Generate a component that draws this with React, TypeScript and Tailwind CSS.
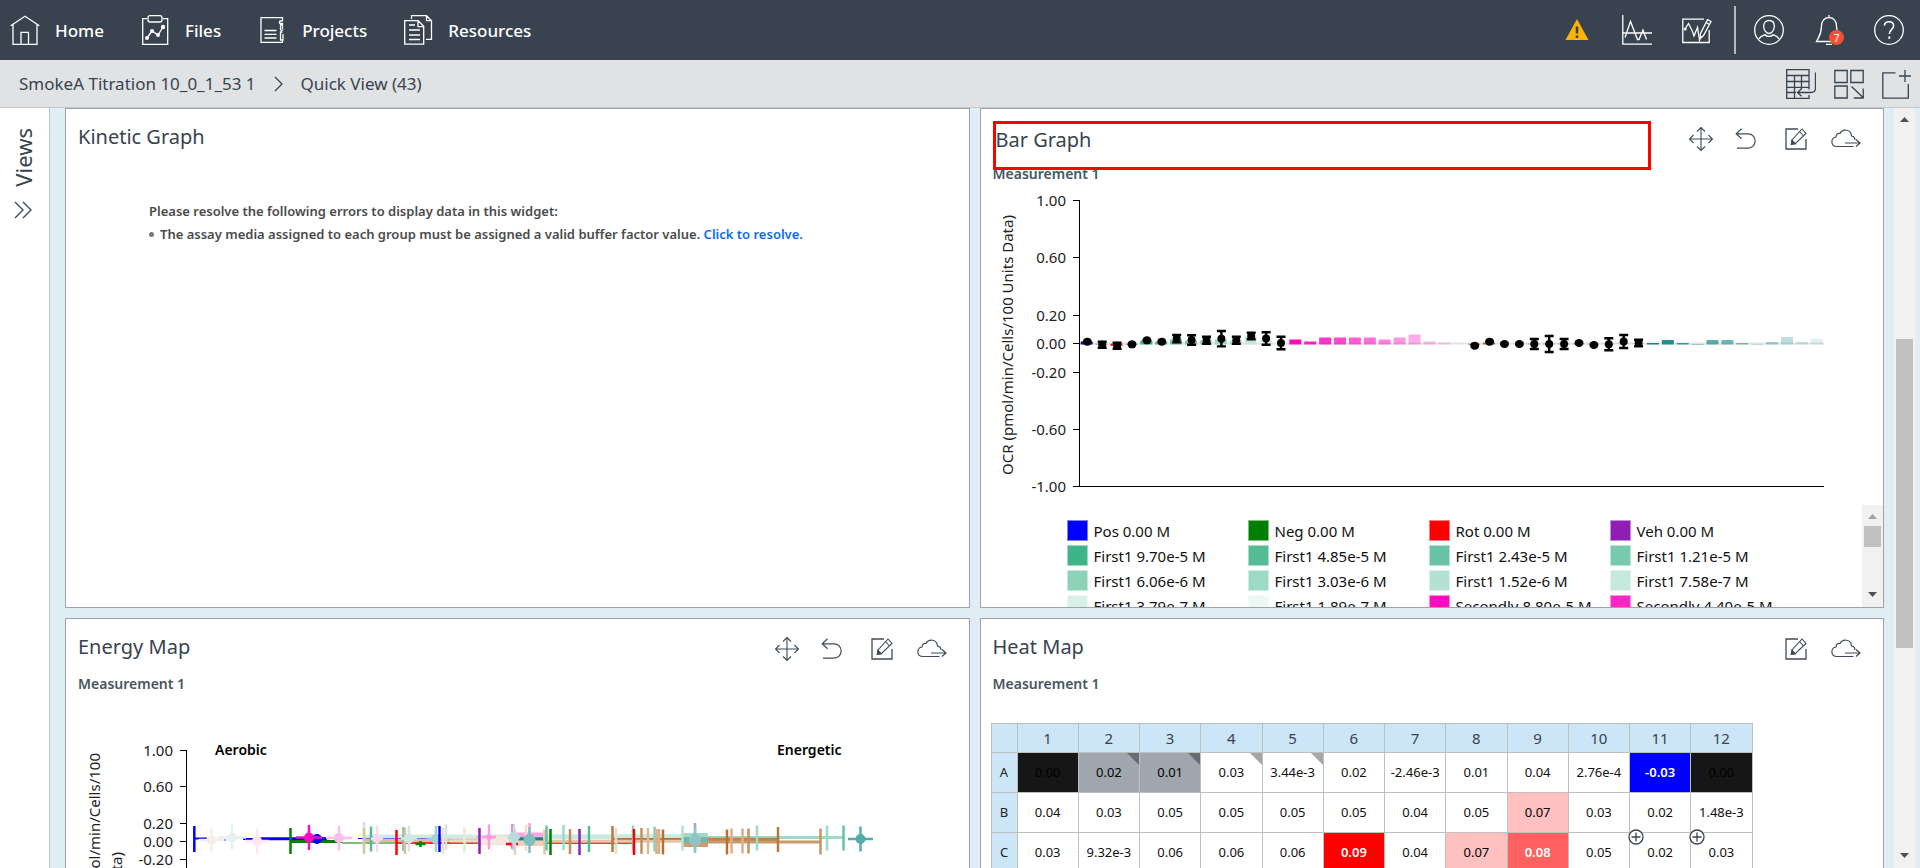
import React from "react";

type Svg = { children: React.ReactNode; w?: number; h?: number; className?: string };

function Icon({ children, w = 30, h = 30, className = "" }: Svg) {
  return (
    <svg width={w} height={h} viewBox={`0 0 ${w} ${h}`} fill="none" stroke="currentColor" strokeWidth="1.3" className={`shrink-0 ${className}`} aria-hidden="true">
      {children}
    </svg>
  );
}

const HomeIcon = () => (
  <Icon>
    <path d="M.7 10.7 15 1.2l14.3 9.5M3 9.5v19.8h24V9.5M11 29V17.3h7.500V29" />
  </Icon>
);
const FilesIcon = () => (
  <Icon>
    <path d="M7 3.700H2.700v25.600h25V3.700H23" />
    <rect x="8" y=".7" width="14" height="6.300" rx="2" />
    <path d="M7 23l5-7 6 4 5-8" />
    <g fill="currentColor" stroke="none">
      <circle cx="7" cy="23" r="2" /><circle cx="12" cy="16" r="2" /><circle cx="18" cy="20" r="2" /><circle cx="23" cy="12" r="2.200" />
    </g>
  </Icon>
);
const ProjectsIcon = () => (
  <Icon>
    <path d="M25.500 6V2.700H4v24.600h21.500v-1.500M7.500 15.500h12M7.500 19.300h12M7.500 23h12" />
    <path d="M25.500 6h-2c-1.500 0-1.500 2.500 0 2.500h2v5.500M25.500 10h-2v4.500c0 1 2.500 1 2.500 0M25.500 17h-2v8h2.500v-6" />
  </Icon>
);
const ResourcesIcon = () => (
  <Icon>
    <path d="M8.500 4V.7h15l5 5v18.600H23M23.500.7v5h5M1.700 5.700h13.500l5.500 5.500v18H1.700zM15 5.700v6h5.700M6 10h6M6 15h11M6 20h11M6 24.500h11" />
  </Icon>
);
const WarningIcon = () => (
  <Icon>
    <path d="M15 4 26.500 25h-23z" fill="#ffb500" stroke="none" />
    <path d="M15 11.500v7M15 20.500v2.500" stroke="#38434f" strokeWidth="2.600" />
  </Icon>
);
const PeaksIcon = () => (
  <Icon>
    <path d="M.8 0v29.200H30M.8 18H30" />
    <path d="M3 22.500 8.500 6.500l7 18h1.500l4-9.500 3.500 9.500" />
  </Icon>
);
const WaveEditIcon = () => (
  <Icon>
    <path d="M22 4.200H.8v23.300h26.400V15M3 14l3.500-5.500 4 8 1.500 4.500 3.500-8.500 2 12.500 1.500-4" />
    <path d="m18.500 18.500-.8 5.500 3.800-3.500 7.500-14-3.500-1.800zM24 7.500l3.500 2" />
    <circle cx="3.200" cy="14" r="1.500" fill="currentColor" stroke="none" />
  </Icon>
);
const UserIcon = () => (
  <Icon>
    <circle cx="15" cy="15" r="14.300" />
    <path d="M15 5.500c3.300 0 5.300 2.300 5.300 5.700 0 3.700-2.300 7.300-5.300 7.300s-5.300-3.600-5.300-7.300c0-3.400 2-5.700 5.300-5.700zM11.500 19.500c-2 1-5 .8-6.500 4.500M18.500 19.500c2 1 5 .8 6.500 4.500M11 19.500c1 2.500 7 2.500 8 0" />
  </Icon>
);
const BellIcon = () => (
  <Icon>
    <path d="M15 0v2.500M15 2.500c-5 0-7.500 4-7.500 8.500 0 8-2 10-5 15.500h24C24 21 22.500 19 22.500 11c0-4.500-2.500-8.500-7.500-8.500zM12 29.300h6" />
  </Icon>
);
const HelpIcon = () => (
  <Icon>
    <circle cx="15" cy="15" r="14.300" />
    <path d="M10.500 10.500C10.500 8 12.500 6.700 15 6.700s4.600 1.500 4.600 4c0 4-4.300 4-4.300 8.300" strokeWidth="1.600" />
    <path d="M15.300 21.500v2.300" strokeWidth="2" />
  </Icon>
);
const TableBackIcon = () => (
  <Icon>
    <path d="M23 20.500V.700H.7v28.600H23V26M.7 6.500H23M.7 12.500H23M.7 18.300H23M.7 23.500H10M8.500 6.500v22.500M15.500 6.500V20" />
    <path d="M29.500 3.500V19c0 3-1.500 4.500-4.500 4.500H11.500m4-3.800-4 3.800 4 3.800" />
  </Icon>
);
const GridArrowIcon = () => (
  <Icon>
    <path d="M.8 1.500h12.400v12H.8zM16.800 1.500h12.400v12H16.800zM.8 17h12.400v12H.8zM17.500 17.500l11.500 11M29.200 19.500v9.500h-9.500" />
  </Icon>
);
const AddFrameIcon = () => (
  <Icon>
    <path d="M13.500 3.800H.8v25.400h25.500V15M23 1v12M17 7h12" />
  </Icon>
);
const MoveIcon = () => (
  <Icon w={24} h={24}>
    <path d="M12 .8v22.400M.8 12h22.400M8 4.500l4-4 4 4M8 19.500l4 4 4-4M4.500 8l-4 4 4 4M19.500 8l4 4-4 4" strokeWidth="1.100" />
  </Icon>
);
const UndoIcon = () => (
  <Icon w={22} h={22}>
    <path d="M6.500.8 1.200 5.800l5.300 5M1.500 5.800H13c9.500 0 9.500 14.400 0 14.400H2" strokeWidth="1.200" />
  </Icon>
);
const EditIcon = () => (
  <Icon w={22} h={22}>
    <path d="M13 1H1v20h20V11" />
    <path d="m7 12-.5 4 4-.5L21 5.500 17 1zM14.500 3.500l4 4.500" strokeWidth="1.100" />
    <path d="m6.300 16.300.7-4 3.200 3.400z" fill="currentColor" />
  </Icon>
);
const CloudIcon = () => (
  <Icon>
    <path d="M22.500 22.500H6C-.8 22.500-.5 13.500 5 13c0-3 2-4 4-3.500C11.500 4.500 20 5 20.500 12c2.500.5 3.500 2 3.500 4M14 19h15m-4-3.500 4 3.500-4 3.500" strokeWidth="1.200" />
  </Icon>
);

function Scroller({ thumb, dimUp = false }: { thumb: string; dimUp?: boolean }) {
  return (
    <div className="flex w-[21px] shrink-0 flex-col items-center bg-[#f1f1f1]" aria-hidden="true">
      <svg width="21" height="21" viewBox="0 0 21 21"><path d="M6 14 10.500 9 15 14z" fill={dimUp ? "#a3a3a3" : "#505050"} /></svg>
      <div className="flex w-[17px] flex-1 flex-col">
        <div className={`w-full bg-[#c1c1c1] ${thumb}`} />
      </div>
      <svg width="21" height="21" viewBox="0 0 21 21"><path d="M6 6 10.500 11 15 6z" fill="#505050" /></svg>
    </div>
  );
}

function Tools({ full = true }: { full?: boolean }) {
  const btn = "flex h-[30px] w-[30px] items-center justify-center";
  return (
    <div className="flex gap-5 text-[#3f4b5a]">
      {full && (
        <>
          <button type="button" aria-label="Move" className="flex h-[30px] w-5 items-center justify-center"><MoveIcon /></button>
          <button type="button" aria-label="Undo" className={btn}><UndoIcon /></button>
        </>
      )}
      <button type="button" aria-label="Edit" className={btn}><EditIcon /></button>
      <button type="button" aria-label="Export" className={btn}><CloudIcon /></button>
    </div>
  );
}

type PanelProps = { title: string; tools?: "all" | "short"; framed?: boolean; sub?: boolean; children?: React.ReactNode };

function Panel({ title, tools, framed = false, sub = true, children }: PanelProps) {
  return (
    <section className="flex h-[500px] min-w-0 flex-col overflow-hidden border border-[#9ba3ad] bg-white">
      <div className="flex h-[60px] shrink-0 items-start justify-between pt-3 pr-[22px] pl-3">
        <h2 className={`text-xl leading-8 text-[#38434f] ${framed ? "h-[49px] w-[658px] border-[3px] border-[#ff0000]" : ""}`}>{title}</h2>
        {tools && <div className="pt-[3px]"><Tools full={tools === "all"} /></div>}
      </div>
      {sub && <p className="h-[13px] pl-3 text-sm leading-[10px] font-semibold text-[#485563]">Measurement 1</p>}
      {children}
    </section>
  );
}

const FIRST = ["#3eb489", "#54bc96", "#67c3a1", "#78caae", "#8cd2b9", "#9fdac6", "#b3e2d2", "#c6e9dd", "#d9f0e7", "#ecf8f3"];
const BAR_PITCH = 14.9;
const ZERO = 153.7;

type Bar = { i: number; h: number; fill: string; o?: number };
const bars: Bar[] = [
  { i: 0, h: 3, fill: "#0000ff" },
  { i: 1, h: -1, fill: "#008000", o: 0.5 },
  { i: 2, h: -2, fill: "#ff0000" },
  { i: 3, h: -1, fill: "#911eb4", o: 0.3 },
  ...[4, 3, 5, 4, 4, 5, 4, 8, 5, 1].map((h, k) => ({ i: 4 + k, h, fill: FIRST[k] })),
  ...[5, 3, 7, 7, 7, 7, 5, 7, 10, 3, 2].map((h, k) => ({ i: 14 + k, h, fill: "#ff0bbf", o: 1 - k * 0.082 })),
  ...[-1, 2, 0, 0, 1, 1, 1, 1, -1, 1, 2, 1].map((h, k) => ({ i: 26 + k, h, fill: "#c06a1f", o: 1 - k * 0.08 })),
  ...[1, 4, 1, 0, 4, 4, 1, 0, 2, 7, 2, 5].map((h, k) => ({ i: 38 + k, h: h + 0.5, fill: "#0f8787", o: 1 - k * 0.08 })),
];
const points: [number, number, number][] = [
  [0, 151.700, 0], [1, 154.700, 3], [2, 155.700, 3], [3, 154.300, 0], [4, 150.300, 0], [5, 151.700, 0], [6, 148.700, 3.700],
  [7, 150, 4.700], [8, 150.300, 3.500], [9, 148.700, 7.700], [10, 150.300, 3.500], [11, 146, 3.200], [12, 148.500, 6.200], [13, 153, 6.200],
  [26, 155.700, 0], [27, 151.700, 0], [28, 154, 0], [29, 154, 0], [30, 154, 5], [31, 154, 8], [32, 154, 5], [33, 153, 0],
  [34, 155, 0], [35, 154.300, 6], [36, 151.500, 6.500], [37, 153, 3.200],
];
const barTicks: [string, number][] = [["1.00", 10.500], ["0.60", 67.500], ["0.20", 125.500], ["0.00", 153.500], ["-0.20", 182.500], ["-0.60", 239.500], ["-1.00", 296.500]];

function BarChart() {
  return (
    <svg width="860" height="315" viewBox="0 0 860 315" className="shrink-0 text-[15px]" role="img" aria-label="Bar graph">
      <path d="M98 153.500H843" stroke="#e3e3e3" strokeWidth="2" />
      {bars.map((b) => (
        <rect key={b.i} x={99.700 + b.i * BAR_PITCH} width="12" y={b.h > 0 ? ZERO + 0.8 - b.h : ZERO} height={Math.abs(b.h)} fill={b.fill} fillOpacity={b.o ?? 1} />
      ))}
      {points.map(([i, y, e]) => {
        const x = 106.300 + i * BAR_PITCH;
        return (
          <g key={i}>
            {e > 0 && <path d={`M${x - 4.500} ${y - e}h9M${x} ${y - e}v${2 * e}M${x - 4.500} ${y + e}h9`} stroke="#000" strokeWidth="2.400" />}
            <ellipse cx={x} cy={y} rx={e > 0 ? 4 : 4.500} ry={4} />
          </g>
        );
      })}
      <path d="M98.500 10v287M92 296.500h751" stroke="#000" fill="none" />
      {barTicks.map(([t, y]) => (
        <g key={t}>
          <path d={`M92 ${y}h7`} stroke="#000" />
          <text x="85" y={y + 5} textAnchor="end" fill="#222">{t}</text>
        </g>
      ))}
      <text transform="translate(32 155) rotate(-90)" textAnchor="middle" fill="#222">OCR (pmol/min/Cells/100 Units Data)</text>
    </svg>
  );
}

const legend: [string, string][] = [
  ["#0000ff", "Pos 0.00 M"], ["#008000", "Neg 0.00 M"], ["#ff0000", "Rot 0.00 M"], ["#911eb4", "Veh 0.00 M"],
  [FIRST[0], "First1 9.70e-5 M"], [FIRST[1], "First1 4.85e-5 M"], [FIRST[2], "First1 2.43e-5 M"], [FIRST[3], "First1 1.21e-5 M"],
  [FIRST[4], "First1 6.06e-6 M"], [FIRST[5], "First1 3.03e-6 M"], [FIRST[6], "First1 1.52e-6 M"], [FIRST[7], "First1 7.58e-7 M"],
  [FIRST[8], "First1 3.79e-7 M"], [FIRST[9], "First1 1.89e-7 M"], ["#ff0bbf", "Secondly 8.80e-5 M"], ["#ff24c5", "Secondly 4.40e-5 M"],
];

function Legend() {
  return (
    <div className="flex min-h-0 flex-1">
      <ul className="grid flex-1 auto-rows-[21px] grid-cols-[repeat(4,181px)] gap-y-1 overflow-hidden pt-[15px] pl-[86px]">
        {legend.map(([c, t]) => (
          <li key={t} className="flex items-center gap-[6px] text-[15px] leading-5 whitespace-nowrap text-[#111]">
            <span className="h-[21px] w-[21px] border border-white/50" style={{ backgroundColor: c }} />
            {t}
          </li>
        ))}
      </ul>
      <Scroller thumb="h-[21px]" dimUp />
    </div>
  );
}

/* [from x, to x, y, thickness, colour] */
const spans: [number, number, number, number, string][] = [
  [128, 141, 93.500, 2, "#0000ff"], [151, 160, 95, 1.500, "#5a5aff"], [177, 194, 94, 2, "#0000ff"], [194, 261, 93.800, 3, "#0000ff"],
  [261, 284, 93, 1, "#0000ff"], [292, 374, 93.500, 1, "#0000ff"],
  [224, 276, 96.500, 3, "#008000"], [276, 345, 98, 2, "#7cc47c"], [344, 370, 97.500, 3, "#008000"],
  [330, 568, 98, 2, "#ff3030"],
  [298, 480, 91.500, 4, "#cdebe0"], [298, 372, 95.500, 3, "#dcbd9c"], [360, 480, 95, 3, "#c9c2b0"],
  [411, 437, 92, 2, "#ff8adb"], [436, 452, 91.500, 3, "#c4cfe2"],
  [449, 477, 90, 5, "#ffa3e4"], [452, 477, 93.800, 3, "#0f8787"], [450, 478, 98.500, 5, "#ecd0b8"],
  [384, 422, 96, 3, "#ecd9c8"], [412, 452, 95.500, 10, "#f3e8dd"],
  [478, 616, 91.800, 5, "#c9ebdf"], [546, 616, 94.500, 3, "#b5713a"], [478, 616, 96.300, 3, "#e3c5a8"],
  [642, 778, 92.500, 3, "#9fdac6"], [616, 712, 94.800, 4, "#c08349"], [616, 755, 97, 3, "#c89a6c"],
  [616, 642, 91, 6, "#9fdac6"], [616, 642, 97, 10, "#cf9b71"], [616, 642, 95, 5, "#6fb5b3"],
];
/* [x, y, half height, colour, half width of the horizontal whisker, dot radius] */
type Mark = [number, number, number, string, number?, number?];
const marks: Mark[] = [
  [128.300, 94, 13, "#0000ff"], [224.500, 96, 13, "#008000"], [251, 94, 4.500, "#0000ff", 9, 5], [243, 92.500, 12.500, "#ff0bbf", 13, 5],
  [145.500, 95, 12.500, "#f6efe8", 13, 5], [166, 92.500, 13, "#e4f1f0", 14, 5], [191, 96, 12.500, "#ffe4f6", 12, 5], [273, 93, 12.500, "#ffbdeb", 13, 5],
  [298, 92, 15, "#c6e9dd"], [298, 96, 13, "#dcc3a8"], [305, 94, 12.500, "#54bc96"], [311, 94, 13, "#ffd6f2", 6, 4], [330.500, 97.500, 12.500, "#ff0000"],
  [337.500, 94, 12, "#74c3a4"], [339, 96, 13, "#dcc3a8"], [343, 93.500, 13, "#cfe8e7", 8, 5], [354.500, 99, 3, "#008000", 5], [370, 94, 13, "#a3d3d1", 8, 5],
  [373.500, 94, 13, "#0000ff"], [377, 96, 13, "#f0e0d2"], [380, 92, 13, "#cfe8e7"], [398.500, 95, 12.500, "#f3e4d8"], [413.500, 96, 13, "#911eb4"],
  [423, 92, 12.500, "#ff9be1", 7, 3], [446, 99, 3, "#ff0000", 6], [446.500, 91.500, 12.500, "#ff5bd2"], [449, 97, 13, "#ecd0b8"], [447.700, 92.500, 13, "#b9dddc", 6, 5.500],
  [460, 93, 13, "#efdccc"], [463.500, 90, 12, "#ff9be1"], [463.500, 95, 13, "#7fbfbe", 5, 6], [478.500, 97, 12.500, "#e3c5a8"],
  [480.500, 93, 12.500, "#67c3a1"], [484.500, 97, 13, "#008000"], [497.500, 92.500, 12.500, "#9fdac6"], [504, 96.500, 12.500, "#c58a55"], [513.500, 97, 13, "#911eb4"],
  [523, 94, 13, "#54bc96"], [546.500, 94, 13, "#b8783f"], [550, 96, 13, "#ecd9c8"], [567, 93, 12.500, "#8cd2b9"], [568, 97, 13, "#ff0000"],
  [575.500, 96, 13, "#c88d5c"], [582, 96, 13, "#dfb793"], [588.500, 94, 12.500, "#8cd2b9"], [590.500, 96.500, 12.500, "#dcae88"], [593, 96.500, 12.500, "#dcae88"],
  [597, 97, 12.500, "#b86f30"], [616.500, 93, 12.500, "#b3e2d2"], [629, 92, 14, "#b598c8"], [629, 95, 13, "#8cc7c5", 5, 6],
  [661, 97, 12.500, "#b86f30"], [665.500, 96, 12.500, "#dcae88"], [676.500, 96, 12.500, "#dcae88"], [682.500, 96, 12.500, "#c88d5c"], [691, 93, 12.500, "#9fdac6"],
  [712, 94.500, 12.500, "#b8783f"], [754.500, 96.500, 13, "#c89262"], [761, 93, 12.500, "#9fdac6"], [777.500, 93, 12.500, "#67c3a1"], [794.500, 94, 12.500, "#55abab", 12.500, 5],
];
const energyTicks: [string, number][] = [["1.00", 5.500], ["0.60", 41.500], ["0.20", 78.500], ["0.00", 96.500], ["-0.20", 114.500], ["-0.60", 150.500], ["-1.00", 186.500]];

function EnergyChart() {
  return (
    <svg width="860" height="272" viewBox="0 -12 860 272" className="mt-[41px] shrink-0 text-[15px]" role="img" aria-label="Energy map">
      <path d="M120.500 5v182M114 186.500h716" stroke="#000" fill="none" />
      {energyTicks.map(([t, y]) => (
        <g key={t}>
          <path d={`M114 ${y}h7`} stroke="#000" />
          <text x="107" y={y + 5} textAnchor="end" fill="#222">{t}</text>
        </g>
      ))}
      <text transform="translate(34 8) rotate(-90)" textAnchor="end" fill="#222">OCR (pmol/min/Cells/100</text>
      <text transform="translate(56 107) rotate(-90)" textAnchor="end" fill="#222">Units Data)</text>
      <text x="149" y="10" className="text-sm font-semibold">Aerobic</text>
      <text x="711" y="10" className="text-sm font-semibold">Energetic</text>
      {spans.map(([a, b, y, w, c], i) => (
        <path key={i} d={`M${a} ${y}H${b}`} stroke={c} strokeWidth={w} />
      ))}
      {marks.map(([x, y, h, c, hw, r], i) => (
        <g key={i} stroke={c} fill={c} strokeWidth="2.500">
          <path d={`M${x} ${y - h}v${2 * h}`} />
          {hw && <path d={`M${x - hw} ${y}h${2 * hw}`} />}
          {r && <circle cx={x} cy={y} r={r} stroke="none" />}
        </g>
      ))}
    </svg>
  );
}

const heat: [string, string[]][] = [
  ["A", ["0.00", "0.02", "0.01", "0.03", "3.44e-3", "0.02", "-2.46e-3", "0.01", "0.04", "2.76e-4", "-0.03", "0.00"]],
  ["B", ["0.04", "0.03", "0.05", "0.05", "0.05", "0.05", "0.04", "0.05", "0.07", "0.03", "0.02", "1.48e-3"]],
  ["C", ["0.03", "9.32e-3", "0.06", "0.06", "0.06", "0.09", "0.04", "0.07", "0.08", "0.05", "0.02", "0.03"]],
];
const tone: Record<string, string> = {
  A1: "bg-[#161616] text-black", A12: "bg-[#161616] text-black",
  A2: "bg-[#a0a6ad] text-black", A3: "bg-[#a0a6ad] text-black",
  A11: "bg-[#0000ff] text-white font-semibold",
  B9: "bg-[#ffc0c0] text-black", C8: "bg-[#ffc0c0] text-black",
  C6: "bg-[#ff0000] text-white font-semibold", C9: "bg-[#ff6060] text-white font-semibold",
};
const flagged = ["A2", "A3", "A4", "A5"];
const added = ["C11", "C12"];

function HeatTable() {
  return (
    <table className="mt-[31px] ml-[10px] w-[762px] shrink-0 table-fixed border-collapse">
      <thead>
        <tr className="h-[29px] bg-[#cce6f7] text-[15px] leading-5 text-[#38434f]">
          <th className="w-[26px] border border-[#bfbfbf]" aria-label="Row" />
          {heat[0][1].map((_, i) => (
            <th key={i} scope="col" className="border border-[#bfbfbf] p-0 font-normal">{i + 1}</th>
          ))}
        </tr>
      </thead>
      <tbody>
        {heat.map(([r, cells]) => (
          <tr key={r} className="h-10">
            <th scope="row" className="border border-[#bfbfbf] bg-[#cce6f7] p-0 text-[13px] font-normal text-[#222]">{r}</th>
            {cells.map((v, i) => {
              const id = `${r}${i + 1}`;
              return (
                <td key={id} className={`relative border border-[#bfbfbf] p-0 text-center text-[13px] ${tone[id] ?? "text-[#111]"}`}>
                  {v}
                  {flagged.includes(id) && (
                    <svg width="12" height="12" viewBox="0 0 12 12" className="absolute top-0 right-0"><path d="M0 0h12v12z" fill="#000" fillOpacity=".35" /></svg>
                  )}
                  {added.includes(id) && (
                    <svg width="16" height="16" viewBox="0 0 16 16" className="absolute -top-1 -left-[2px] z-10"><circle cx="8" cy="8" r="7" fill="#fff" stroke="#38434f" strokeWidth="1.300" /><path d="M8 3.500v9M3.500 8h9" stroke="#38434f" strokeWidth="1.300" /></svg>
                  )}
                </td>
              );
            })}
          </tr>
        ))}
      </tbody>
    </table>
  );
}

const nav = [
  { label: "Home", icon: <HomeIcon /> },
  { label: "Files", icon: <FilesIcon /> },
  { label: "Projects", icon: <ProjectsIcon /> },
  { label: "Resources", icon: <ResourcesIcon /> },
];

export default function App() {
  return (
    <div className="flex h-screen flex-col overflow-hidden bg-white font-['Noto_Sans',sans-serif] text-[#38434f]">
      <header className="flex h-[60px] shrink-0 items-center justify-between bg-[#38434f] pr-4 pl-[10px] text-white">
        <nav className="flex gap-9">
          {nav.map((n) => (
            <a key={n.label} href="#" className="flex items-center gap-[15px] text-[17px] leading-8 font-medium">
              {n.icon}
              <span className="pt-[2px]">{n.label}</span>
            </a>
          ))}
        </nav>
        <div className="flex items-center">
          <div className="flex gap-[30px] pr-[22px]">
            <button type="button" aria-label="Warnings"><WarningIcon /></button>
            <button type="button" aria-label="Wave analysis"><PeaksIcon /></button>
            <button type="button" aria-label="Edit wave"><WaveEditIcon /></button>
          </div>
          <div className="h-12 w-[2px] bg-[#b4b9be]" />
          <div className="flex gap-[30px] pl-[18px]">
            <button type="button" aria-label="Account"><UserIcon /></button>
            <button type="button" aria-label="Notifications" className="relative">
              <BellIcon />
              <span className="absolute top-[15px] left-[15px] flex h-[15px] w-[15px] items-center justify-center rounded-full bg-[#f15236] text-[10px] leading-none">7</span>
            </button>
            <button type="button" aria-label="Help"><HelpIcon /></button>
          </div>
        </div>
      </header>

      <div className="flex h-12 shrink-0 items-center justify-between border-b border-[#c3c6ca] bg-[#e1e2e4] pr-2 pl-[19px]">
        <nav aria-label="Breadcrumb" className="flex items-center gap-[18px] text-[17px] leading-8">
          <a href="#">SmokeA Titration 10_0_1_53 1</a>
          <Icon w={9} h={16}><path d="m1 1 7 7-7 7" /></Icon>
          <a href="#">Quick View (43)</a>
        </nav>
        <div className="flex gap-[18px]">
          <button type="button" aria-label="Back to table"><TableBackIcon /></button>
          <button type="button" aria-label="Arrange"><GridArrowIcon /></button>
          <button type="button" aria-label="Add widget"><AddFrameIcon /></button>
        </div>
      </div>

      <div className="flex min-h-0 flex-1">
        <aside className="flex w-[50px] shrink-0 flex-col items-center gap-[14px] border-r border-[#c0c6cc] pt-5 pr-[3px]">
          <span className="rotate-180 text-[22px] leading-8 [writing-mode:vertical-rl]">Views</span>
          <button type="button" aria-label="Expand views"><Icon w={18} h={18}><path d="m1 1 8 8-8 8M9 1l8 8-8 8" /></Icon></button>
        </aside>

        <main className="flex min-w-0 flex-1 bg-[#e0edf5] pr-[5px] pl-[15px]">
          <div className="grid min-w-0 flex-1 auto-rows-max grid-cols-2 gap-[10px] overflow-hidden pr-[10px]">
            <Panel title="Kinetic Graph" sub={false}>
              <div className="pt-[31px] pl-[83px] text-[13px] leading-[23px] font-semibold text-[#4a4a4a]">
                <p>Please resolve the following errors to display data in this widget:</p>
                <ul>
                  <li className="flex items-center gap-[6px]">
                    <span className="h-[5px] w-[5px] rounded-full bg-[#777]" />
                    <span>The assay media assigned to each group must be assigned a valid buffer factor value. <a href="#" className="text-[#0a6cf5]">Click to resolve.</a></span>
                  </li>
                </ul>
              </div>
            </Panel>
            <Panel title="Bar Graph" tools="all" framed>
              <div className="shrink-0 pt-2"><BarChart /></div>
              <Legend />
            </Panel>
            <Panel title="Energy Map" tools="all">
              <EnergyChart />
            </Panel>
            <Panel title="Heat Map" tools="short">
              <HeatTable />
            </Panel>
          </div>
          <Scroller thumb="mt-[210px] h-[309px]" />
        </main>
      </div>
    </div>
  );
}
